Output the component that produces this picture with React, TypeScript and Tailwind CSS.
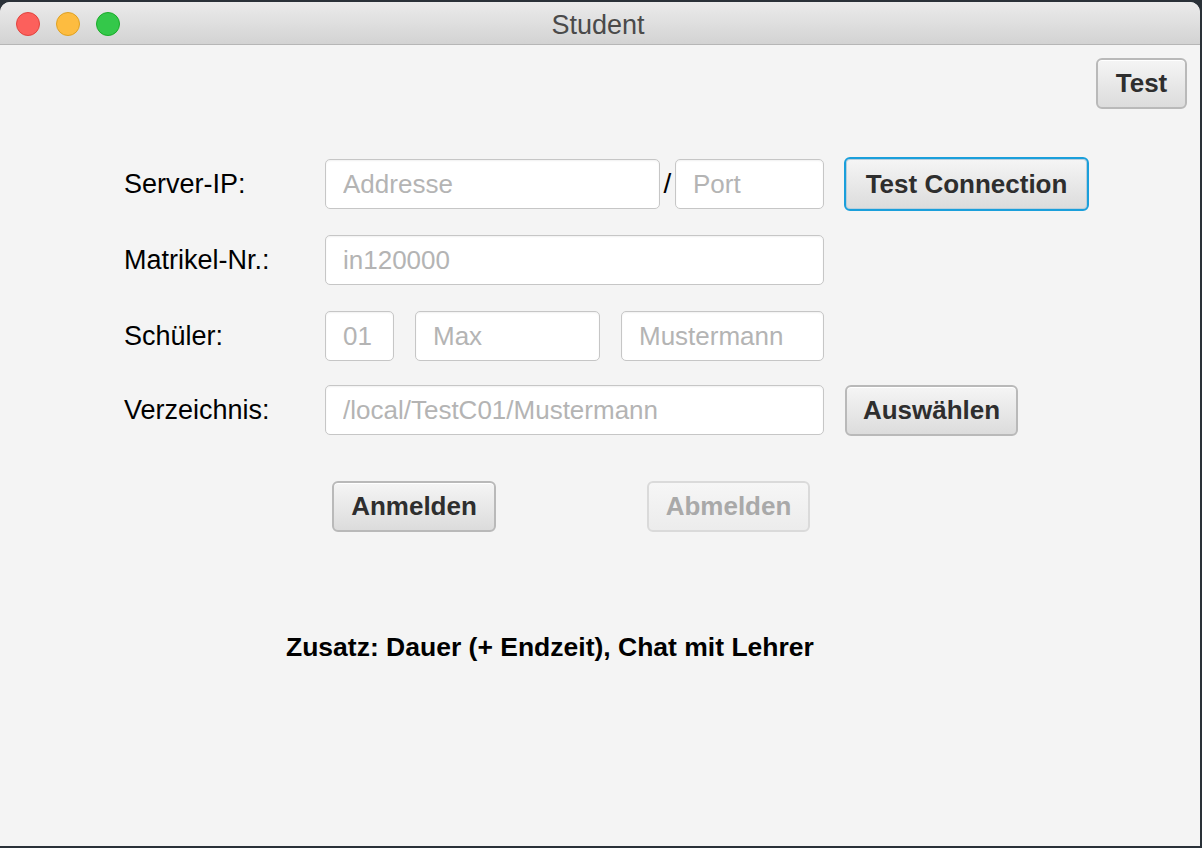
import React from 'react';

const font = { fontFamily: '"Liberation Sans", Arial, Helvetica, sans-serif' };

const Field = ({ placeholder, className }: { placeholder: string; className: string }) => (
  <input
    readOnly
    placeholder={placeholder}
    className={`h-[50px] rounded-[5px] border border-[#c6c6c6] bg-white pl-[17px] text-[26px] text-[#222] outline-none shadow-[inset_0_1px_2px_rgba(0,0,0,0.06)] placeholder:text-[#b4b4b4] ${className}`}
  />
);

const Button = ({
  label,
  className,
  focused = false,
  disabled = false,
}: {
  label: string;
  className: string;
  focused?: boolean;
  disabled?: boolean;
}) => (
  <button
    disabled={disabled}
    className={`flex items-center justify-center rounded-[6px] bg-gradient-to-b font-bold text-[26px] ${
      disabled
        ? 'border-2 border-[#dadada] from-[#f6f6f6] to-[#ececec] text-[#a9a9a9]'
        : focused
        ? 'border-2 border-[#1a9fdb] from-[#f5f5f5] to-[#dcdcdc] text-[#2e2e2e] shadow-[inset_0_0_0_1px_#b9cfdc]'
        : 'border-2 border-[#b9b9b9] from-[#f5f5f5] to-[#dcdcdc] text-[#2e2e2e] shadow-[inset_0_1px_0_#ffffff]'
    } ${className}`}
  >
    {label}
  </button>
);

const App = () => {
  return (
    <div className="w-[1202px] h-[848px] overflow-hidden bg-[#2a3138]" style={font}>
      <div className="mt-[2px] flex h-[844px] w-[1200px] flex-col overflow-hidden rounded-t-[10px] bg-[#f4f4f4]">
        {/* Title bar */}
        <div className="grid h-[43px] shrink-0 grid-cols-[1fr_auto_1fr] items-center border-b border-[#b6b6b6] bg-gradient-to-b from-[#ebebeb] to-[#d3d3d3] pt-[2px]">
          <div className="flex items-center gap-[16px] pl-[16px]">
            <span className="h-[24px] w-[24px] rounded-full border border-[#e0443e] bg-[#fc605c]" />
            <span className="h-[24px] w-[24px] rounded-full border border-[#dea123] bg-[#fdbc40]" />
            <span className="h-[24px] w-[24px] rounded-full border border-[#1aab29] bg-[#34c84a]" />
          </div>
          <div className="-translate-x-[2px] translate-y-[1px] text-[27px] leading-none text-[#4a4a4a]">Student</div>
          <div />
        </div>

        {/* Content */}
        <div className="flex flex-1 flex-col">
          <div className="flex justify-end pr-[13px] pt-[13px]">
            <Button label="Test" className="h-[51px] w-[91px]" />
          </div>

          <div className="mt-[50px] flex flex-col pl-[124px] text-[27px] text-black">
            <div className="flex h-[50px] items-center">
              <div className="w-[201px]">Server-IP:</div>
              <Field placeholder="Addresse" className="w-[335px]" />
              <div className="w-[15px] text-center text-[28px]">/</div>
              <Field placeholder="Port" className="w-[149px]" />
              <Button label="Test Connection" focused className="ml-[20px] h-[54px] w-[245px]" />
            </div>

            <div className="mt-[26px] flex h-[50px] items-center">
              <div className="w-[201px]">Matrikel-Nr.:</div>
              <Field placeholder="in120000" className="w-[499px]" />
            </div>

            <div className="mt-[26px] flex h-[50px] items-center">
              <div className="w-[201px]">Schüler:</div>
              <Field placeholder="01" className="w-[69px]" />
              <Field placeholder="Max" className="ml-[21px] w-[185px]" />
              <Field placeholder="Mustermann" className="ml-[21px] w-[203px]" />
            </div>

            <div className="mt-[24px] flex h-[50px] items-center">
              <div className="w-[201px]">Verzeichnis:</div>
              <Field placeholder="/local/TestC01/Mustermann" className="w-[499px]" />
              <Button label="Auswählen" className="ml-[21px] h-[51px] w-[173px]" />
            </div>

            <div className="mt-[46px] flex items-center pl-[208px]">
              <Button label="Anmelden" className="h-[51px] w-[164px]" />
              <Button label="Abmelden" disabled className="ml-[151px] h-[51px] w-[163px]" />
            </div>
          </div>

          <div className="mt-[100px] pl-[286px] text-[26.5px] font-bold leading-[30px] text-black">
            Zusatz: Dauer (+ Endzeit), Chat mit Lehrer
          </div>
        </div>
      </div>
    </div>
  );
};

export default App;
